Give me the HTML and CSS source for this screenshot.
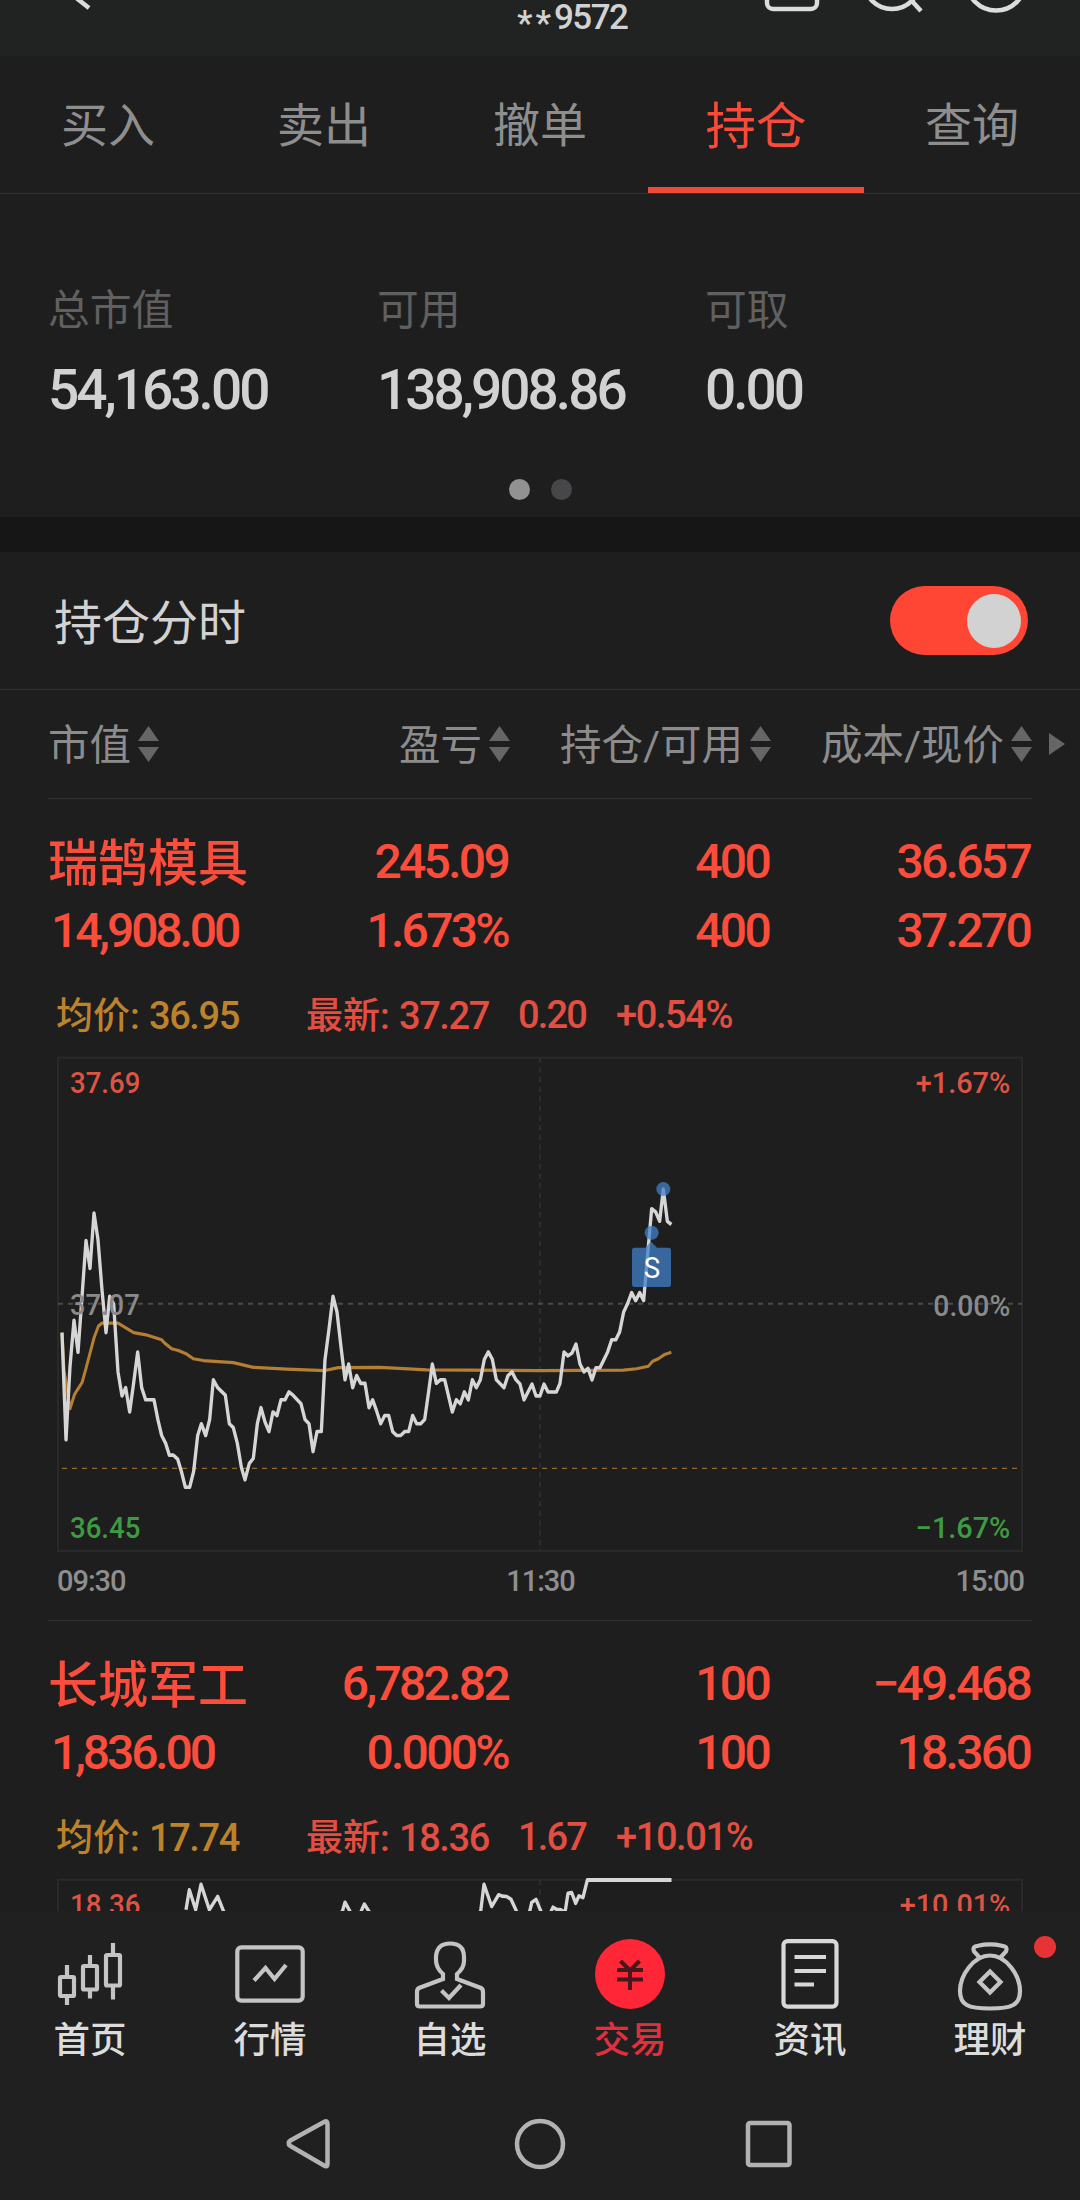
FILE: index.html
```html
<!DOCTYPE html>
<html lang="zh-CN">
<head>
<meta charset="utf-8">
<title>持仓</title>
<link rel="stylesheet" href="styles.css">
</head>
<body>
<div class="app">
  <header class="topbar">
    <svg class="topbar-back" width="40" height="56" viewBox="0 0 40 56"><path d="M9 -7 L28 8"/></svg>
    <div class="topbar-account"><span class="mask">**</span>9572</div>
    <svg class="topbar-tools" width="280" height="56" viewBox="0 0 280 56">
      <rect x="17" y="-34" width="50" height="43" rx="6"/>
      <circle cx="142" cy="-19" r="28"/><path d="M161 0 L171 11"/>
      <circle cx="246" cy="-19" r="29.5"/>
    </svg>
  </header>

  <nav class="tabs">
    <a class="tab">买入</a>
    <a class="tab">卖出</a>
    <a class="tab">撤单</a>
    <a class="tab tab-active">持仓</a>
    <a class="tab">查询</a>
  </nav>

  <section class="summary">
    <div class="summary-grid">
      <div class="summary-item"><span class="summary-label">总市值</span><span class="summary-value">54,163.00</span></div>
      <div class="summary-item"><span class="summary-label">可用</span><span class="summary-value">138,908.86</span></div>
      <div class="summary-item"><span class="summary-label">可取</span><span class="summary-value">0.00</span></div>
    </div>
    <div class="dots"><i class="dot dot-on"></i><i class="dot"></i></div>
  </section>

  <div class="band"></div>

  <section class="switch-row">
    <span>持仓分时</span>
    <div class="switch"><i class="knob"></i></div>
  </section>

  <main class="list">
    <div class="cols columns-head">
      <div class="head-cell head-left"><span>市值</span><svg class="sort" width="21" height="36" viewBox="0 0 21 36"><path d="M10.500 0L21 15H0zM0 21H21L10.500 36z"/></svg></div>
      <div class="head-cell"><span>盈亏</span><svg class="sort" width="21" height="36" viewBox="0 0 21 36"><path d="M10.500 0L21 15H0zM0 21H21L10.500 36z"/></svg></div>
      <div class="head-cell"><span>持仓/可用</span><svg class="sort" width="21" height="36" viewBox="0 0 21 36"><path d="M10.500 0L21 15H0zM0 21H21L10.500 36z"/></svg></div>
      <div class="head-cell"><span>成本/现价</span><svg class="sort" width="21" height="36" viewBox="0 0 21 36"><path d="M10.500 0L21 15H0zM0 21H21L10.500 36z"/></svg></div>
      <svg class="more" width="16" height="22" viewBox="0 0 16 22"><path d="M0 0L16 11L0 22z"/></svg>
    </div>

    <article class="holding">
      <div class="cols figures">
        <b class="name">瑞鹄模具</b><span>245.09</span><span>400</span><span>36.657</span>
        <span class="value">14,908.00</span><span>1.673%</span><span>400</span><span>37.270</span>
      </div>
      <div class="quote">
        <span class="avg">均价: <em>36.95</em></span>
        <span class="latest">最新: <em>37.27</em></span>
        <em class="change">0.20</em>
        <em>+0.54%</em>
      </div>
      <svg class="chart" width="966" height="496" viewBox="51 48 2898 1389" preserveAspectRatio="none">
        <rect class="frame" x="54" y="50" width="2892" height="1381"/>
        <path class="mid-v" d="M1500 50V1431"/>
        <path class="mid-h" d="M54 739H2946"/>
        <path class="cost" d="M66 1200H2931"/>
        <polyline class="average" points="66,820 72,925 90,1033 104,992 126,960 138,920 162,835 175,802 186,793 234,793 281,820 318,826 365,840 375,850 395,865 415,870 440,880 460,893 490,898 580,904 640,917 740,922 855,926 895,918 1020,917 1160,924 1500,926 1750,925 1790,921 1825,914 1838,900 1855,893 1872,882 1894,875"/>
        <polyline class="price" points="66,820 78,1120 90,915 102,785 114,875 126,720 138,562 150,640 162,485 174,560 186,700 198,820 209,718 221,740 234,930 246,997 257,974 269,1042 281,960 293,874 305,974 317,1008 342,1008 354,1065 365,1108 377,1130 388,1163 400,1163 413,1174 424,1208 436,1253 449,1253 461,1208 473,1108 484,1075 497,1108 509,1063 520,952 533,974 556,995 568,1075 580,1086 592,1130 604,1197 615,1232 628,1186 640,1172 652,1075 663,1030 675,1070 687,1097 699,1042 711,1052 723,1008 735,1008 747,986 759,995 783,1019 795,1063 807,1075 819,1153 831,1097 844,1097 855,895 867,810 879,718 891,762 903,860 915,952 926,908 938,974 950,940 962,962 975,962 987,1030 998,1008 1010,1040 1022,1075 1034,1052 1046,1052 1058,1097 1070,1108 1082,1108 1094,1097 1106,1097 1118,1052 1130,1075 1142,1075 1154,1063 1166,985 1177,908 1189,962 1201,952 1214,952 1237,1042 1249,1008 1261,1019 1273,986 1285,1008 1297,952 1309,974 1321,952 1333,895 1345,874 1357,895 1369,952 1392,974 1404,940 1416,930 1428,952 1440,964 1452,1008 1476,964 1488,997 1500,997 1512,964 1524,986 1549,986 1560,962 1572,874 1584,885 1596,877 1608,852 1620,908 1632,930 1644,920 1656,952 1668,918 1680,918 1703,874 1715,840 1727,840 1739,818 1751,762 1763,738 1775,708 1787,730 1799,708 1811,730 1823,600 1835,473 1847,482 1859,508 1870,418 1882,508 1894,517"/>
        <g class="trade">
          <ellipse cx="1870" cy="418" rx="21" ry="19.6"/><ellipse cx="1835" cy="540" rx="21" ry="19.6"/>
          <path d="M1784 582H1816L1833 565L1851 582H1885Q1893 582 1893 590V684Q1893 692 1885 692H1784Q1776 692 1776 684V590Q1776 582 1784 582Z"/>
        </g>
        <text class="trade-text" x="1836" y="666">S</text>
        <text class="up" x="90" y="148" textLength="211" lengthAdjust="spacingAndGlyphs">37.69</text>
        <text class="flat" x="90" y="770" textLength="209" lengthAdjust="spacingAndGlyphs">37.07</text>
        <text class="down" x="90" y="1396" textLength="211" lengthAdjust="spacingAndGlyphs">36.45</text>
        <text class="up" x="2627" y="148" textLength="284" lengthAdjust="spacingAndGlyphs">+1.67%</text>
        <text class="flat" x="2680" y="772" textLength="231" lengthAdjust="spacingAndGlyphs">0.00%</text>
        <text class="down" x="2627" y="1396" textLength="284" lengthAdjust="spacingAndGlyphs">−1.67%</text>
      </svg>
      <div class="times"><span>09:30</span><span>11:30</span><span>15:00</span></div>
    </article>

    <article class="holding">
      <div class="cols figures">
        <b class="name">长城军工</b><span>6,782.82</span><span>100</span><span>−49.468</span>
        <span class="value">1,836.00</span><span>0.000%</span><span>100</span><span>18.360</span>
      </div>
      <div class="quote">
        <span class="avg">均价: <em>17.74</em></span>
        <span class="latest">最新: <em>18.36</em></span>
        <em class="change">1.67</em>
        <em>+10.01%</em>
      </div>
      <svg class="chart" width="966" height="496" viewBox="51 48 2898 1389" preserveAspectRatio="none">
        <rect class="frame" x="54" y="50" width="2892" height="1381"/>
        <path class="mid-v" d="M1500 50V1431"/>
        <polyline class="price" points="438,134 448,78 467,134 483,63 508,134 533,97 551,139 700,280 907,139 915,113 930,139 946,187 963,139 973,118 987,139 1150,280 1322,139 1332,63 1355,125 1376,92 1386,96 1400,97 1413,105 1430,139 1450,187 1469,139 1475,114 1488,105 1503,139 1518,187 1533,139 1539,127 1550,133 1563,134 1569,140 1576,136 1584,88 1595,86 1607,116 1617,95 1629,100 1642,51 1894,51"/>
        <path class="limit" d="M1640 51H1894"/>
        <text class="up" x="90" y="148" textLength="211" lengthAdjust="spacingAndGlyphs">18.36</text>
        <text class="up" x="2579" y="148" textLength="332" lengthAdjust="spacingAndGlyphs">+10.01%</text>
      </svg>
    </article>
  </main>

  <nav class="bottom">
    <a class="item">
      <svg width="72" height="75" viewBox="0 0 72 75"><g class="line"><path d="M13 20V31M13 52V60M36 10V20M36 46V53.500M59 -2V9M59 42V54.500"/><rect x="6" y="32" width="14" height="19" rx="1"/><rect x="29" y="21" width="14" height="23.500" rx="1"/><rect x="52" y="10" width="14" height="30.500" rx="1"/></g></svg>
      <span>首页</span>
    </a>
    <a class="item">
      <svg width="72" height="75" viewBox="0 0 72 75"><g class="line"><rect x="3.300" y="2.400" width="65.400" height="53.200" rx="4"/><path d="M20 35.500L31.500 23L40.500 34L52 20"/></g></svg>
      <span>行情</span>
    </a>
    <a class="item">
      <svg width="72" height="75" viewBox="0 0 72 75"><g class="line"><path d="M29 34V29Q22 23 22 15V11.500Q23 -1.500 36 -1.500Q50 -1.500 50 12V16Q50 23 43 29V34L67 43Q69 44 69 47V59Q69 61.500 66 61.500H6Q3 61.500 3 59V47Q3 44 5 43Z"/><path d="M27.500 45.500L35 53L47 40"/></g></svg>
      <span>自选</span>
    </a>
    <a class="item item-active">
      <svg width="72" height="75" viewBox="0 0 72 75"><circle cx="36" cy="29" r="35" fill="#ff2637"/><path d="M26.500 16L36 25.500L45.500 16M23 25H49M23 34.500H49M36 25V45" fill="none" stroke="#46171b" stroke-width="4"/></svg>
      <span>交易</span>
    </a>
    <a class="item">
      <svg width="72" height="75" viewBox="0 0 72 75"><g class="line line-bright"><rect x="9.500" y="-3.900" width="53" height="65.500" rx="4"/><path d="M20.500 12H52M20.500 26H52M20.500 39.500H40"/></g></svg>
      <span>资讯</span>
    </a>
    <a class="item">
      <svg width="72" height="75" viewBox="0 0 72 75"><g class="line"><path d="M26 13L20 6.500Q18 1 24 .8Q36 -2 48 .8Q54 1 52 6.500L46 13"/><path d="M36 10.500C20 10.500 6 30 6 46C6 60 14 63.500 36 63.500S66 60 66 46C66 30 52 10.500 36 10.500Z"/><path d="M36 26.500L46.500 37L36 47.500L25.500 37Z"/></g></svg>
      <span>理财</span>
      <i class="badge"></i>
    </a>
  </nav>

  <div class="system">
    <svg width="60" height="60" viewBox="5 0 60 60"><path d="M13 29.500Q12 28 14.500 26.500L48 8Q51.500 6 51.500 10V50Q51.500 53.500 48 51.500L14.500 32Q12.500 31 13 29.500Z"/></svg>
    <svg width="60" height="60" viewBox="0 0 60 60"><circle cx="30" cy="30" r="23"/></svg>
    <svg width="60" height="60" viewBox="0 0 60 60"><rect x="9" y="9" width="41.500" height="42" rx="2"/></svg>
  </div>
</div>
</body>
</html>
```
FILE: styles.css
```css
* { box-sizing: border-box; }

body {
  margin: 0;
  background: #1e1e1e;
  color: #d2d2d2;
  font-family: Roboto, "Noto Sans CJK SC", sans-serif;
}

svg { display: block; overflow: visible; }
em, i { font-style: normal; }

.app {
  width: 1080px;
  height: 2200px;
  overflow: hidden;
  display: flex;
  flex-direction: column;
}
.app > * { flex: none; }

.topbar {
  height: 56px;
  background: #202322;
  display: grid;
  grid-template-columns: 517px 223px 1fr;
  overflow: hidden;
}
.topbar svg { fill: none; stroke: #dcdcdc; stroke-width: 4.5; }
.topbar-back { margin-left: 61px; }
.topbar-account {
  font-size: 35px;
  font-weight: 500;
  line-height: 36px;
  letter-spacing: -1.600px;
  white-space: nowrap;
}
.mask { letter-spacing: 3px; vertical-align: -6px; line-height: 0; }
.topbar-tools { margin-left: 10px; }

.tabs {
  height: 138px;
  display: grid;
  grid-template-columns: repeat(5, 1fr);
  border-bottom: 1px solid #333;
}
.tab {
  display: flex;
  align-items: center;
  justify-content: center;
  color: #8e8e8e;
  font-size: 47px;
  padding-bottom: 6px;
}
.tab-active {
  color: #fa4b3a;
  font-size: 50.500px;
  box-shadow: inset 0 -6px #f04a38;
}

.summary { height: 323px; padding-top: 88px; }
.summary-grid {
  display: grid;
  grid-template-columns: 329px 328px 1fr;
  padding-left: 48px;
}
.summary-item { display: flex; flex-direction: column; }
.summary-label {
  color: #606060;
  font-size: 41.800px;
  line-height: 58px;
}
.summary-value {
  font-size: 55px;
  font-weight: 500;
  line-height: 64px;
  letter-spacing: -3px;
  margin-top: 18px;
}
.dots { display: flex; justify-content: center; gap: 21px; margin-top: 57px; }
.dot { width: 21px; height: 21px; border-radius: 50%; background: #47474a; }
.dot-on { background: #929292; }

.band { height: 35px; background: #161616; }

.switch-row {
  height: 138px;
  padding: 0 52px 0 54px;
  display: flex;
  align-items: center;
  justify-content: space-between;
  border-bottom: 1px solid #333;
  font-size: 48px;
}
.switch-row span { padding-bottom: 3px; }
.switch {
  width: 138px;
  height: 69px;
  border-radius: 35px;
  background: #ff4534;
  display: flex;
  align-items: center;
  justify-content: flex-end;
  padding-right: 7px;
}
.knob { width: 54px; height: 54px; border-radius: 50%; background: #d2d2d2; }

.list { height: 1221px; padding: 0 48px; overflow: hidden; }
.cols { display: grid; grid-template-columns: 252px 210px 261px 261px; }

.columns-head {
  grid-template-columns: 252px 210px 261px 261px 33px;
  height: 109px;
  border-bottom: 1px solid #333;
  width: 984px;
  align-items: center;
}
.head-cell {
  display: flex;
  align-items: center;
  justify-content: flex-end;
  gap: 7px;
  color: #8c8c8c;
  font-size: 41.500px;
  white-space: nowrap;
}
.head-cell span { padding-bottom: 4px; }
.head-left { justify-content: flex-start; }
.sort, .more { fill: #666; }
.more { justify-self: end; }

.holding {
  height: 822px;
  border-bottom: 1px solid #333;
  padding-top: 28px;
}
.figures {
  grid-template-rows: 69px 69px;
  align-items: center;
  color: #fb4d3b;
  font-size: 48px;
  font-weight: 500;
  letter-spacing: -2.700px;
  text-align: right;
}
.figures span { margin-right: 2px; }
.name {
  font-size: 50px;
  font-weight: 500;
  letter-spacing: 0;
  text-align: left;
  white-space: nowrap;
  padding-bottom: 6px;
}
.figures .value { text-align: left; padding-left: 3px; letter-spacing: -3.100px; }

.quote {
  height: 56px;
  margin-top: 22px;
  display: flex;
  align-items: center;
  padding-left: 8px;
  color: #e24f42;
  font-size: 37px;
  font-weight: 500;
}
.quote em { font-size: 38px; letter-spacing: -1.800px; font-weight: 500; }
.avg { width: 250px; color: #bd832c; padding-bottom: 5px; }
.latest { width: 212px; padding-bottom: 5px; }
.quote .change { width: 98px; }
.quote em:last-child { letter-spacing: -1.400px; }

.chart { margin: 14px 0 0 9px; }
.chart text { font-size: 83px; font-weight: 500; }
.frame { fill: none; stroke: #292929; stroke-width: 6; }
.mid-v { fill: none; stroke: #2c2c2c; stroke-width: 6; stroke-dasharray: 15 12; }
.mid-h { fill: none; stroke: #4b4b4b; stroke-width: 5; stroke-dasharray: 15 15; }
.cost { fill: none; stroke: #94692e; stroke-width: 4; stroke-dasharray: 15 15; }
.average { fill: none; stroke: #b47f35; stroke-width: 9; stroke-linejoin: round; }
.price { fill: none; stroke: #d6d6d6; stroke-width: 10; stroke-linejoin: round; }
.limit { stroke: #d6d6d6; stroke-width: 11; }
.trade { fill: #4080c8; fill-opacity: .75; }
.chart .trade-text { fill: #fff; text-anchor: middle; font-weight: 400; }
.up { fill: #dd5444; }
.down { fill: #3f9b42; }
.flat { fill: #8a8a8a; }

.times {
  display: grid;
  grid-template-columns: 1fr 1fr 1fr;
  margin: 11px 8px 0 9px;
  color: #8e8e8e;
  font-size: 29px;
  font-weight: 500;
  line-height: 34px;
  letter-spacing: -1px;
}
.times span:nth-child(2) { text-align: center; }
.times span:nth-child(3) { text-align: right; }

.bottom {
  height: 175px;
  background: #202020;
  display: grid;
  grid-template-columns: repeat(6, 1fr);
}
.item {
  position: relative;
  display: flex;
  flex-direction: column;
  align-items: center;
  padding-top: 34px;
  color: #dcdcdc;
  font-size: 36.500px;
  font-weight: 500;
  line-height: 42px;
}
.item-active { color: #e0303d; }
.line { fill: none; stroke: #c4c4c4; stroke-width: 4.200; }
.line-bright { stroke: #d8d8d8; }
.badge {
  position: absolute;
  left: 134px;
  top: 25px;
  width: 22px;
  height: 22px;
  border-radius: 50%;
  background: #e63434;
}

.system {
  height: 114px;
  background: #202020;
  display: grid;
  grid-template-columns: 60px 60px 60px;
  gap: 169px;
  justify-content: center;
  padding-top: 28px;
}
.system svg { fill: none; stroke: #b2b2b2; stroke-width: 4.500; overflow: visible; }
```
